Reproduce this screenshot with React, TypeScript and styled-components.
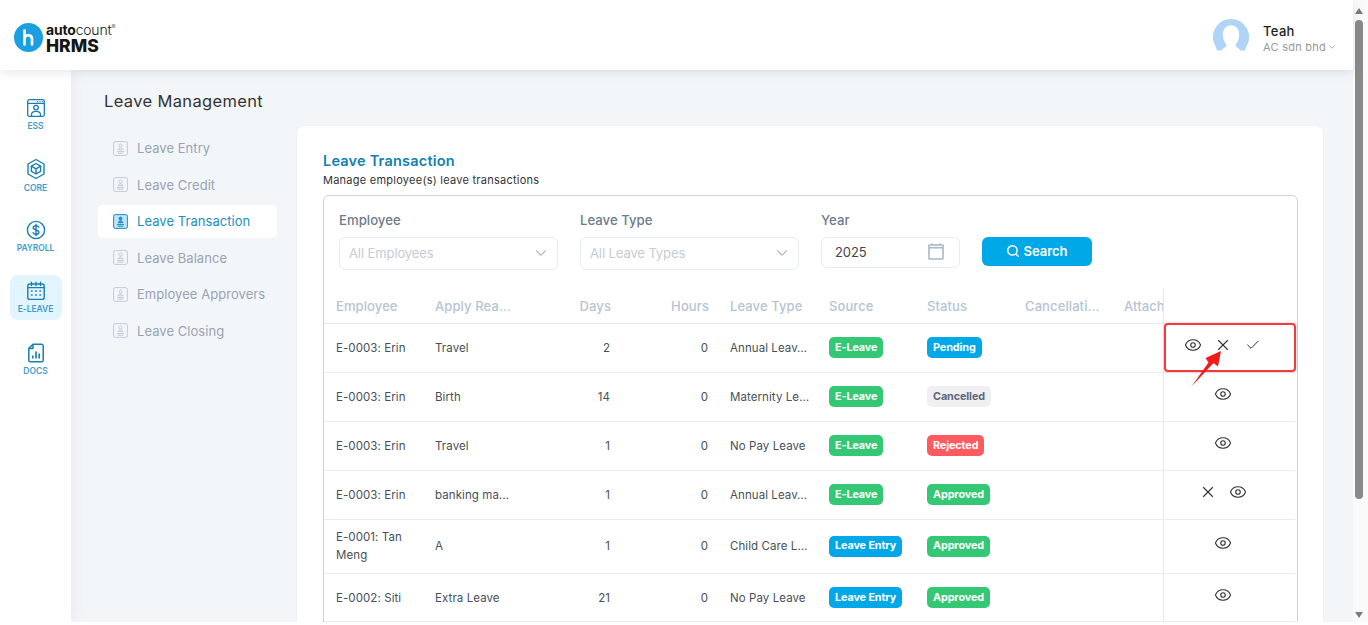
import React from "react";
import styled, { createGlobalStyle } from "styled-components";
import { Eye, X, Check, ChevronDown, Search } from "lucide-react";

const Global = createGlobalStyle`
  html, body { margin: 0; padding: 0; height: 100%; overflow: hidden; background: #fff; }
  * { box-sizing: border-box; }
  body { font-family: Inter, "Open Sans", sans-serif; color: #444; }
`;

const Shell = styled.div`display: flex; height: 622px; overflow: hidden;`;
const Page = styled.div`flex: 1; min-width: 0; display: flex; flex-direction: column; background: #f3f6f9;`;

const Header = styled.header`
  height: 70px; flex: none; background: #fff; display: flex; align-items: center; justify-content: space-between;
  padding: 0 16px 0 14px; box-shadow: 0 2px 10px rgba(60, 80, 110, 0.14); position: relative; z-index: 3;
`;
const Logo = styled.div`display: flex; align-items: center; gap: 3px; margin-top: 4px;`;
const LogoWords = styled.div`display: flex; flex-direction: column; color: #161616;`;
const LogoTop = styled.div`font-size: 14px; line-height: 17px; letter-spacing: -0.2px; font-weight: 300; b { font-weight: 700; } sup { font-size: 6px; line-height: 0; }`;
const LogoBottom = styled.div`font-size: 17.5px; line-height: 16px; font-weight: 800; letter-spacing: 0;`;
const User = styled.div`display: flex; align-items: center; gap: 14px;`;
const UserText = styled.div`display: flex; flex-direction: column; padding-top: 6px;`;
const UserName = styled.div`font-size: 13px; line-height: 17px; font-weight: 500; color: #222; letter-spacing: 0.3px;`;
const UserOrg = styled.div`font-size: 11px; line-height: 14px; color: #9a9a9a; display: flex; align-items: center; gap: 1px; letter-spacing: 0.25px;`;

const Body = styled.div`flex: 1; min-height: 0; display: flex;`;
const Rail = styled.nav`
  width: 71px; flex: none; background: #fff; display: flex; flex-direction: column; align-items: center;
  padding-top: 21px; box-shadow: 2px 0 12px rgba(60, 80, 110, 0.07); position: relative; z-index: 2;
`;
const RailItem = styled.div<{ $active?: boolean }>`
  width: 52px; height: 45px; margin-bottom: 16.3px; padding-top: 2px; border-radius: 8px; display: flex; flex-direction: column; align-items: center; justify-content: center;
  gap: 2px; background: ${(p) => (p.$active ? "#e2f4fd" : "transparent")};
  svg { display: block; }
`;
const RailLabel = styled.span`font-size: 8.5px; line-height: 12px; font-weight: 600; color: #3f9cc9; letter-spacing: -0.05px;`;

const Content = styled.main`flex: 1; min-width: 0; display: grid; grid-template-columns: 225px 1028px; align-items: start;`;
const SubNav = styled.div`padding-top: 21px;`;
const SubTitle = styled.h1`margin: 0 0 20.5px 33px; font-size: 16.5px; line-height: 20px; font-weight: 400; color: #333; letter-spacing: 0.35px;`;
const Menu = styled.div`margin-left: 27px; width: 179px; display: flex; flex-direction: column; gap: 3.6px;`;
const MenuItem = styled.div<{ $active?: boolean }>`
  height: 33px; border-radius: 5px; padding-left: 15px; display: flex; align-items: center; gap: 9px; font-size: 13px; letter-spacing: 0.05px;
  background: ${(p) => (p.$active ? "#fff" : "transparent")}; color: ${(p) => (p.$active ? "#1d8fc4" : "#9aa3b2")};
`;

const Card = styled.section`
  margin-top: 55px; height: 560px; background: #fff; border-radius: 8px 8px 0 0; padding: 25px 25px 0 26px; border: 1px solid #eef1f5; border-bottom: 0;
`;
const CardTitle = styled.h2`margin: 0; font-size: 14.5px; line-height: 20px; font-weight: 600; color: #1280b0; letter-spacing: 0.2px;`;
const CardSub = styled.p`margin: 2px 0 8px; font-size: 11px; line-height: 14px; color: #333; letter-spacing: 0.25px;`;
const Box = styled.div`border: 1px solid #c8d3df; border-radius: 6px; height: 600px;`;
const Filters = styled.div`display: flex; align-items: flex-start; gap: 22px; padding: 14px 0 18px 15px;`;
const Field = styled.div<{ $w: number }>`width: ${(p) => p.$w}px;`;
const Label = styled.div`font-size: 13.2px; line-height: 20px; margin-bottom: 7px; font-weight: 500; color: #6d7b8c;`;
const Select = styled.div`
  height: 33px; border: 1px solid #e6ecf3; border-radius: 6px; padding: 0 7px 2px 9px; display: flex; align-items: center; justify-content: space-between;
  font-size: 13px; color: #c6ccd5; letter-spacing: -0.1px; svg { color: #b5bac2; }
`;
const YearInput = styled(Select)`height: 31px; padding: 0 15px 2px 13px; color: #444;`;
const SearchButton = styled.button`
  margin-top: 27px; width: 110px; height: 29px; border: 0; border-radius: 6px; background: #00a8e8; color: #fff; font: 600 13px Inter, sans-serif;
  display: flex; align-items: center; justify-content: center; gap: 3px; padding: 0 0 1px; svg { flex: none; }
`;

const cols = "99px 99px 98px 98px 99px 98px 98px 99px 51px 132px";
const HeadRow = styled.div`display: grid; grid-template-columns: ${cols}; height: 36px; width: 971px; border-bottom: 1px solid #e6eaf0;`;
const HeadCell = styled.div<{ $right?: boolean }>`
  font-size: 13px; font-weight: 500; color: #b6c4d4; padding: 0 ${(p) => (p.$right ? "9px" : "0")} 0 12px; display: flex; align-items: center; white-space: nowrap; overflow: hidden;
  justify-content: ${(p) => (p.$right ? "flex-end" : "flex-start")}; letter-spacing: 0.1px;
`;
const HeadAction = styled.div`border-left: 1px solid #e4e8ef;`;
const Row = styled.div`
  display: grid; grid-template-columns: ${cols}; width: 971px; min-height: 48.9px; border-bottom: 1px solid #e9edf2;
`;
const Cell = styled.div<{ $right?: boolean; $wrap?: boolean }>`
  font-size: 11.5px; line-height: 18px; color: #484f5a; padding: 8.5px ${(p) => (p.$right ? "10px" : "4px")} 8.5px 12px; display: flex; align-items: center; letter-spacing: 0.08px;
  white-space: ${(p) => (p.$wrap ? "normal" : "nowrap")};
  justify-content: ${(p) => (p.$right ? "flex-end" : "flex-start")};
`;
const Badge = styled.span<{ $kind: string }>`
  height: 21px; padding: 0 6px; border-radius: 5px; display: inline-flex; align-items: center; white-space: nowrap; font-size: 10.8px; font-weight: 700; letter-spacing: -0.1px;
  color: ${(p) => (p.$kind === "grey" ? "#5f6878" : "#fff")};
  background: ${(p) => ({ green: "#34c875", blue: "#00a8e8", red: "#ff5a5f", grey: "#f0f0f2" } as Record<string, string>)[p.$kind]};
`;
const ActionCell = styled.div`
  position: relative; border-left: 1px solid #e4e8ef; padding: 0 14px 6px 0; display: flex; align-items: center; justify-content: center; color: #333;
`;
const ActionIcon = styled.span`width: 30px; display: flex; justify-content: center;`;
const Highlight = styled.div`
  position: absolute; left: 0; top: -1px; width: 132px; height: 49px; border: 2px solid #f23b3b; border-radius: 4px; box-shadow: 0 0 3px rgba(120, 40, 40, 0.25); z-index: 2;
`;
const Arrow = styled.svg`position: absolute; left: 22px; top: 24px; z-index: 3;`;

const Scrollbar = styled.div`
  width: 15px; flex: none; background: #fafafa; display: flex; flex-direction: column; align-items: flex-start; padding: 8px 0 4px 2px;
`;
const Thumb = styled.div`width: 8px; height: 479px; margin: 6px 0 auto; border-radius: 4px; background: #8a8a8a;`;
const ArrowTri = styled.div<{ $down?: boolean }>`
  width: 0; height: 0; border-left: 4.5px solid transparent; border-right: 4.5px solid transparent;
  ${(p) => (p.$down ? "border-top: 6px solid #7a7a7a;" : "border-bottom: 6px solid #7a7a7a;")}
`;

const Blue = "#1a7fb0";

const IconEss = () => (
  <svg width="20" height="20" viewBox="0 0 20 20" fill="none" stroke={Blue} strokeWidth="1.3">
    <rect x="1.7" y="1.7" width="16.6" height="16.6" rx="1.5" />
    <path d="M2 5.4h16" />
    <path d="M11 3.6h1M13.5 3.6h1M16 3.6h.8" />
    <circle cx="10" cy="9.6" r="2.3" />
    <path d="M5.5 18v-1.5c0-2 2-3.2 4.5-3.2s4.5 1.2 4.5 3.2V18" />
  </svg>
);
const IconCore = () => (
  <svg width="20" height="22" viewBox="0 0 20 22" fill="none" stroke={Blue} strokeWidth="1.4" strokeLinejoin="round">
    <path d="M10 1.5l8 4.5v10l-8 4.5-8-4.5V6z" />
    <path d="M10 5.5l4.6 2.6v5.3L10 16l-4.6-2.6V8.1z" />
    <path d="M5.4 8.1L10 10.8l4.6-2.7M10 10.8V16" />
  </svg>
);
const IconPayroll = () => (
  <svg width="20" height="20" viewBox="0 0 20 20" fill="none" stroke={Blue} strokeWidth="1.4" strokeLinecap="round">
    <circle cx="10" cy="10" r="8.6" />
    <path d="M12.8 7.2c-.4-1-1.5-1.5-2.8-1.5-1.5 0-2.8.8-2.8 2.1 0 2.9 5.7 1.5 5.7 4.4 0 1.3-1.3 2.1-2.9 2.1-1.4 0-2.5-.6-2.9-1.6M10 4.2v11.6" />
  </svg>
);
const IconLeave = () => (
  <svg width="20" height="20" viewBox="0 0 20 20" fill="none" stroke={Blue} strokeWidth="1.4" strokeLinecap="round">
    <rect x="1.8" y="3" width="16.4" height="15.4" rx="2" />
    <path d="M5.5 1.2v3.4M10 1.2v3.4M14.5 1.2v3.4M2 6.6h16" />
    <path d="M5.5 10h.6M9.7 10h.6M13.9 10h.6M5.5 14h.6M9.7 14h.6M13.9 14h.6" strokeWidth="1.6" />
  </svg>
);
const IconDocs = () => (
  <svg width="18" height="20" viewBox="0 0 18 20" fill="none" stroke={Blue} strokeWidth="1.5" strokeLinejoin="round">
    <path d="M6 1.2h8.6a1.6 1.6 0 0 1 1.6 1.6v14.4a1.6 1.6 0 0 1-1.6 1.6H3.4a1.6 1.6 0 0 1-1.6-1.6V5.4z" />
    <path d="M6 1.5v4H2" />
    <path d="M5.8 15.5v-3M9 15.5V8.5M12.2 15.5v-5" strokeWidth="1.7" />
  </svg>
);
const MenuIcon = ({ active }: { active?: boolean }) => {
  const s = active ? "#1d8fc4" : "#c3ccd9";
  return (
    <svg width="15" height="15" viewBox="0 0 15 15" fill={active ? "#bfe4f6" : "none"} stroke={s} strokeWidth="1">
      <rect x="0.6" y="0.6" width="13.8" height="13.8" rx="1.6" />
      <circle cx="7.5" cy="4.6" r="1.5" fill={active ? s : "none"} />
      <path d="M5.2 8.8c0-1.2 1-1.8 2.3-1.8s2.3.6 2.3 1.8zM4 10.6h7M4.8 12.2h5.4" fill={active ? s : "none"} />
    </svg>
  );
};
const Calendar = () => (
  <svg width="16" height="17" viewBox="0 0 16 17" fill="none" stroke="#a9b7c8" strokeWidth="1.6">
    <rect x="1" y="2" width="14" height="14" rx="0.6" />
    <path d="M1 4.8h14M4 .5v2M12 .5v2" />
  </svg>
);
const Avatar = () => (
  <svg width="36" height="33" viewBox="0 0 36 33">
    <path fill="#b0d4f5" d="M18 0a18 18 0 0 1 15.6 27L32 31.5H27.500c-1.400-2-4-3-4.600-4.200-.3-.7-.2-1.600.2-2.500 2-2 3-5.500 3-9.300C26.100 10 22.800 6.300 18 6.300S9.900 10 9.900 15.500c0 3.800 1 7.300 3 9.300.4.900.5 1.800.2 2.500-.6 1.200-3.200 2.200-4.600 4.200H4l-1.600-4.500A18 18 0 0 1 18 0z" />
  </svg>
);

type R = { emp: string; reason: string; days: number; type: string; src: string; srcKind: string; status: string; statusKind: string; actions: string; hi?: boolean };
const rows: R[] = [
  { emp: "E-0003: Erin", reason: "Travel", days: 2, type: "Annual Leav…", src: "E-Leave", srcKind: "green", status: "Pending", statusKind: "blue", actions: "exc", hi: true },
  { emp: "E-0003: Erin", reason: "Birth", days: 14, type: "Maternity Le…", src: "E-Leave", srcKind: "green", status: "Cancelled", statusKind: "grey", actions: "e" },
  { emp: "E-0003: Erin", reason: "Travel", days: 1, type: "No Pay Leave", src: "E-Leave", srcKind: "green", status: "Rejected", statusKind: "red", actions: "e" },
  { emp: "E-0003: Erin", reason: "banking ma…", days: 1, type: "Annual Leav…", src: "E-Leave", srcKind: "green", status: "Approved", statusKind: "green", actions: "xe" },
  { emp: "E-0001: Tan Meng", reason: "A", days: 1, type: "Child Care L…", src: "Leave Entry", srcKind: "blue", status: "Approved", statusKind: "green", actions: "e" },
  { emp: "E-0002: Siti", reason: "Extra Leave", days: 21, type: "No Pay Leave", src: "Leave Entry", srcKind: "blue", status: "Approved", statusKind: "green", actions: "e" },
];
const icons: Record<string, React.ReactNode> = {
  e: <Eye size={18} strokeWidth={1.5} />,
  x: <X size={18} strokeWidth={1.5} />,
  c: <Check size={16} strokeWidth={1.5} />,
};
const nav = ["Leave Entry", "Leave Credit", "Leave Transaction", "Leave Balance", "Employee Approvers", "Leave Closing"];

export default function App() {
  return (
    <Shell>
      <Global />
      <Page>
        <Header>
          <Logo>
            <svg width="29" height="29" viewBox="0 0 29 29">
              <circle cx="14.5" cy="14.5" r="14.5" fill="#1c9fe0" />
              <path d="M10.5 7.5v14M10.5 16c0-2.500 1.700-3.800 3.800-3.800s3.700 1.300 3.700 3.800v5.500" fill="none" stroke="#fff" strokeWidth="2.6" strokeLinecap="round" />
            </svg>
            <LogoWords>
              <LogoTop><b>auto</b>count<sup>®</sup></LogoTop>
              <LogoBottom>HRMS</LogoBottom>
            </LogoWords>
          </Logo>
          <User>
            <Avatar />
            <UserText>
              <UserName>Teah</UserName>
              <UserOrg>AC sdn bhd <ChevronDown size={10} /></UserOrg>
            </UserText>
          </User>
        </Header>
        <Body>
          <Rail>
            <RailItem><IconEss /><RailLabel>ESS</RailLabel></RailItem>
            <RailItem><IconCore /><RailLabel>CORE</RailLabel></RailItem>
            <RailItem><IconPayroll /><RailLabel>PAYROLL</RailLabel></RailItem>
            <RailItem $active><IconLeave /><RailLabel>E-LEAVE</RailLabel></RailItem>
            <RailItem><IconDocs /><RailLabel>DOCS</RailLabel></RailItem>
          </Rail>
          <Content>
            <SubNav>
              <SubTitle>Leave Management</SubTitle>
              <Menu>
                {nav.map((n) => (
                  <MenuItem key={n} $active={n === "Leave Transaction"}>
                    <MenuIcon active={n === "Leave Transaction"} />
                    {n}
                  </MenuItem>
                ))}
              </Menu>
            </SubNav>
            <Card>
              <CardTitle>Leave Transaction</CardTitle>
              <CardSub>Manage employee(s) leave transactions</CardSub>
              <Box>
                <Filters>
                  <Field $w={219}>
                    <Label>Employee</Label>
                    <Select>All Employees <ChevronDown size={18} strokeWidth={1.5} /></Select>
                  </Field>
                  <Field $w={219}>
                    <Label>Leave Type</Label>
                    <Select>All Leave Types <ChevronDown size={18} strokeWidth={1.5} /></Select>
                  </Field>
                  <Field $w={139}>
                    <Label>Year</Label>
                    <YearInput>2025 <Calendar /></YearInput>
                  </Field>
                  <SearchButton><Search size={14} strokeWidth={2.5} />Search</SearchButton>
                </Filters>
                <HeadRow>
                  <HeadCell>Employee</HeadCell>
                  <HeadCell>Apply Rea…</HeadCell>
                  <HeadCell $right>Days</HeadCell>
                  <HeadCell $right>Hours</HeadCell>
                  <HeadCell>Leave Type</HeadCell>
                  <HeadCell>Source</HeadCell>
                  <HeadCell>Status</HeadCell>
                  <HeadCell>Cancellati…</HeadCell>
                  <HeadCell>Attachment</HeadCell>
                  <HeadAction />
                </HeadRow>
                {rows.map((r, i) => (
                  <Row key={i}>
                    <Cell $wrap>{r.emp}</Cell>
                    <Cell>{r.reason}</Cell>
                    <Cell $right>{r.days}</Cell>
                    <Cell $right>0</Cell>
                    <Cell>{r.type}</Cell>
                    <Cell><Badge $kind={r.srcKind}>{r.src}</Badge></Cell>
                    <Cell><Badge $kind={r.statusKind}>{r.status}</Badge></Cell>
                    <Cell />
                    <Cell />
                    <ActionCell>
                      {r.actions.split("").map((a, j) => (
                        <ActionIcon key={j}>{icons[a]}</ActionIcon>
                      ))}
                      {r.hi && (
                        <>
                          <Highlight />
                          <Arrow width="40" height="42" viewBox="1186 348 40 42">
                            <polygon fill="#f01c1c" points="1191.5,386.5 1208.5,362.5 1205.5,358 1221,351 1218,366.5 1213.5,363" />
                          </Arrow>
                        </>
                      )}
                    </ActionCell>
                  </Row>
                ))}
              </Box>
            </Card>
          </Content>
        </Body>
      </Page>
      <Scrollbar>
        <ArrowTri />
        <Thumb />
        <ArrowTri $down />
      </Scrollbar>
    </Shell>
  );
}
